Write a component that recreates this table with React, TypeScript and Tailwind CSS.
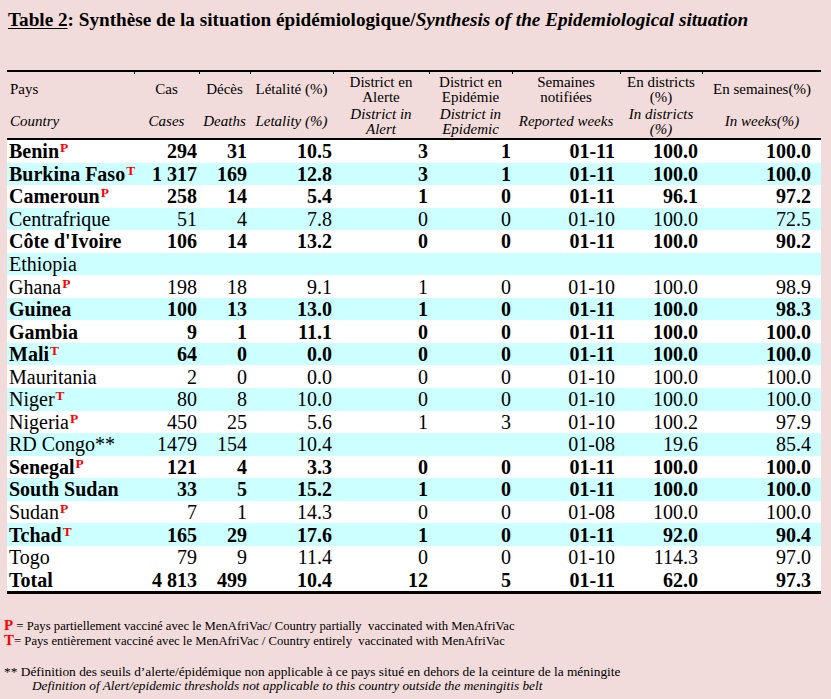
import React from "react";

type Row = { n: string; s?: string; b: boolean; v: string[] };

const rows: Row[] = [
  { n: "Benin", s: "P", b: true, v: ["294", "31", "10.5", "3", "1", "01-11", "100.0", "100.0"] },
  { n: "Burkina Faso", s: "T", b: true, v: ["1 317", "169", "12.8", "3", "1", "01-11", "100.0", "100.0"] },
  { n: "Cameroun", s: "P", b: true, v: ["258", "14", "5.4", "1", "0", "01-11", "96.1", "97.2"] },
  { n: "Centrafrique", b: false, v: ["51", "4", "7.8", "0", "0", "01-10", "100.0", "72.5"] },
  { n: "Côte d'Ivoire", b: true, v: ["106", "14", "13.2", "0", "0", "01-11", "100.0", "90.2"] },
  { n: "Ethiopia", b: false, v: ["", "", "", "", "", "", "", ""] },
  { n: "Ghana", s: "P", b: false, v: ["198", "18", "9.1", "1", "0", "01-10", "100.0", "98.9"] },
  { n: "Guinea", b: true, v: ["100", "13", "13.0", "1", "0", "01-11", "100.0", "98.3"] },
  { n: "Gambia", b: true, v: ["9", "1", "11.1", "0", "0", "01-11", "100.0", "100.0"] },
  { n: "Mali", s: "T", b: true, v: ["64", "0", "0.0", "0", "0", "01-11", "100.0", "100.0"] },
  { n: "Mauritania", b: false, v: ["2", "0", "0.0", "0", "0", "01-10", "100.0", "100.0"] },
  { n: "Niger", s: "T", b: false, v: ["80", "8", "10.0", "0", "0", "01-10", "100.0", "100.0"] },
  { n: "Nigeria", s: "P", b: false, v: ["450", "25", "5.6", "1", "3", "01-10", "100.2", "97.9"] },
  { n: "RD Congo**", b: false, v: ["1479", "154", "10.4", "", "", "01-08", "19.6", "85.4"] },
  { n: "Senegal", s: "P", b: true, v: ["121", "4", "3.3", "0", "0", "01-11", "100.0", "100.0"] },
  { n: "South Sudan", b: true, v: ["33", "5", "15.2", "1", "0", "01-11", "100.0", "100.0"] },
  { n: "Sudan", s: "P", b: false, v: ["7", "1", "14.3", "0", "0", "01-08", "100.0", "100.0"] },
  { n: "Tchad", s: "T", b: true, v: ["165", "29", "17.6", "1", "0", "01-11", "92.0", "90.4"] },
  { n: "Togo", b: false, v: ["79", "9", "11.4", "0", "0", "01-10", "114.3", "97.0"] },
  { n: "Total", b: true, v: ["4 813", "499", "10.4", "12", "5", "01-11", "62.0", "97.3"] },
];

const grid = "grid grid-cols-[127px_65px_51px_83px_96px_83px_108px_82px_120px]";
const numPad = ["pr-[2px]", "pr-[3px]", "pr-[1px]", "pr-[1px]", "pr-[1px]", "pr-[5px]", "pr-[4px]", "pr-[11px]"];

const head1: React.ReactNode[] = [
  "Pays",
  "Cas",
  "Décès",
  "Létalité (%)",
  <>District en<br />Alerte</>,
  <>District en<br />Epidémie</>,
  <>Semaines<br />notifiées</>,
  <>En districts<br />(%)</>,
  "En semaines(%)",
];
const head2: React.ReactNode[] = [
  "Country",
  "Cases",
  "Deaths",
  "Letality (%)",
  <>District in<br />Alert</>,
  <>District in<br />Epidemic</>,
  "Reported weeks",
  <>In districts<br />(%)</>,
  "In weeks(%)",
];

function HeadRow({ cells, italic, h }: { cells: React.ReactNode[]; italic?: boolean; h: string }) {
  return (
    <div className={`${grid} ${h} text-[15px] leading-[15px] ${italic ? "italic" : ""}`}>
      {cells.map((c, i) => (
        <div
          key={i}
          className={`flex items-center ${i === 0 ? "justify-start pl-[3px]" : "justify-center text-center"}`}
        >
          <div>{c}</div>
        </div>
      ))}
    </div>
  );
}

export default function App() {
  return (
    <div className="w-[831px] h-[699px] bg-[#f2dcdb] text-black font-['Liberation_Serif',serif] overflow-hidden">
      <div className="pl-[8px] pt-[8px] h-[32px] text-[19.2px] leading-[24px] font-bold whitespace-nowrap">
        <span className="underline underline-offset-[2px]">Table 2</span>: Synthèse de la situation épidémiologique/
        <span className="italic">Synthesis of the Epidemiological situation</span>
      </div>

      <div className="mt-[38px] ml-[7px] w-[814px]">
        <div className="border-t-2 border-black">
          <div className={`${grid} h-[2px]`}>
            {head1.map((_, i) => (
              <div key={i} className={i === 0 ? "" : "border-l border-black"} />
            ))}
          </div>
          <HeadRow cells={head1} h="h-[31px]" />
          <HeadRow cells={head2} italic h="h-[33px]" />
        </div>
        <div className="border-t-2 border-b-[3px] border-black">
          {rows.map((r, i) => {
            const cyan = i % 2 === 1 && i < 19;
            return (
              <div
                key={r.n}
                className={`${grid} h-[22.55px] items-center text-[20px] leading-[22px] whitespace-nowrap ${
                  cyan ? "bg-[#ccffff]" : "bg-white"
                } ${r.b ? "font-bold" : "font-normal"}`}
              >
                <div className="pl-[2px]">
                  {r.n}
                  {r.s && (
                    <sup className="text-[13.5px] font-bold text-[#ff0000] ml-[1px] -top-[6px]">{r.s}</sup>
                  )}
                </div>
                {r.v.map((v, j) => (
                  <div key={j} className={`text-right ${numPad[j]}`}>
                    {v}
                  </div>
                ))}
              </div>
            );
          })}
        </div>
      </div>

      <div className="mt-[24px] pl-[4px] leading-[14px] whitespace-nowrap">
        <div className="text-[12.7px]">
          <span className="text-[#ff0000] font-bold text-[15px]">P</span> = Pays partiellement vacciné avec le
          MenAfriVac/ Country partially&nbsp; vaccinated with MenAfriVac
        </div>
        <div className="text-[12.7px]">
          <span className="text-[#ff0000] font-bold text-[15px]">T</span>= Pays entièrement vacciné avec le MenAfriVac /
          Country entirely&nbsp; vaccinated with MenAfriVac
        </div>
        <div className="mt-[17px] text-[13.4px]">
          ** Définition des seuils d’alerte/épidémique non applicable à ce pays situé en dehors de la ceinture de la
          méningite
        </div>
        <div className="pl-[28px] italic text-[13.3px]">
          Definition of Alert/epidemic thresholds not applicable to this country outside the meningitis belt
        </div>
      </div>
    </div>
  );
}
